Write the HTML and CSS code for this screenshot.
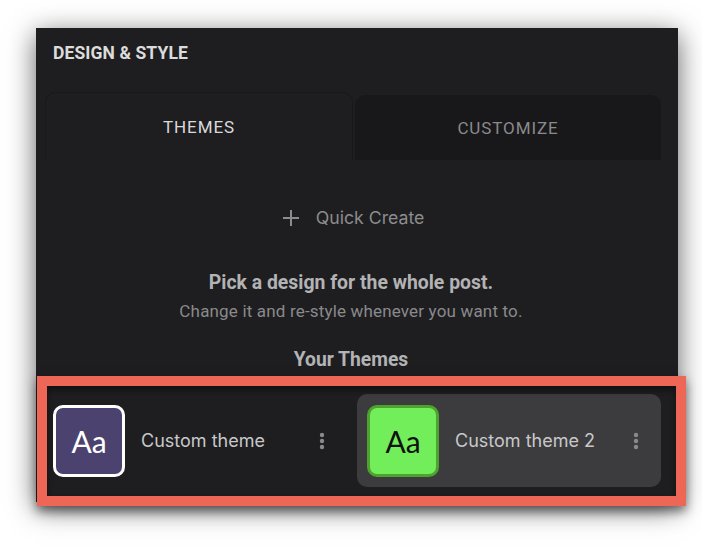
FILE: index.html
```html
<!DOCTYPE html>
<html lang="en">
<head>
<meta charset="utf-8">
<title>Design &amp; Style</title>
<link rel="stylesheet" href="styles.css">
</head>
<body>
<div class="stage">
  <section class="panel">
    <h1 class="panel-title">DESIGN &amp; STYLE</h1>
    <div class="tabs">
      <div class="tab tab-active">THEMES</div>
      <div class="tab tab-idle">CUSTOMIZE</div>
    </div>
    <div class="intro">
      <div class="quick-create">
        <svg class="plus" width="18" height="18" viewBox="0 0 18 18"><path d="M9 1v16M1 9h16" stroke="#8c8c8e" stroke-width="2" fill="none"/></svg>
        <span>Quick Create</span>
      </div>
      <p class="pick">Pick a design for the whole post.</p>
      <p class="change">Change it and re-style whenever you want to.</p>
      <h2 class="your-themes">Your Themes</h2>
    </div>
    <div class="cards">
      <div class="card">
        <div class="swatch swatch-purple">Aa</div>
        <span class="card-name">Custom theme</span>
        <svg class="more" width="6" height="18" viewBox="0 0 6 18"><circle cx="3" cy="3" r="2.2" fill="#8a8a8c"/><circle cx="3" cy="9" r="2.2" fill="#8a8a8c"/><circle cx="3" cy="15" r="2.2" fill="#8a8a8c"/></svg>
      </div>
      <div class="card card-selected">
        <div class="swatch swatch-green">Aa</div>
        <span class="card-name">Custom theme 2</span>
        <svg class="more" width="6" height="18" viewBox="0 0 6 18"><circle cx="3" cy="3" r="2.2" fill="#8a8a8c"/><circle cx="3" cy="9" r="2.2" fill="#8a8a8c"/><circle cx="3" cy="15" r="2.2" fill="#8a8a8c"/></svg>
      </div>
    </div>
  </section>
  <div class="highlight"></div>
</div>
</body>
</html>
```

FILE: styles.css
```css
html, body {
  margin: 0;
  padding: 0;
  background: #ffffff;
}
body {
  width: 702px;
  height: 552px;
  overflow: hidden;
  font-family: Roboto, "Liberation Sans", sans-serif;
}
.stage {
  position: relative;
  width: 702px;
  height: 552px;
  padding: 28px 0 0 36px;
  box-sizing: border-box;
}
.panel {
  width: 642px;
  height: 474px;
  background: #1e1e20;
  box-shadow: 0 6px 26px rgba(0, 0, 0, 0.62);
  display: flex;
  flex-direction: column;
  box-sizing: border-box;
  padding-top: 13px;
}
.panel-title {
  margin: 0 0 0 17px;
  font-size: 17.5px;
  line-height: 24px;
  font-weight: 700;
  letter-spacing: 0.1px;
  color: #dcdcdc;
}
.tabs {
  display: flex;
  align-items: flex-end;
  gap: 2px;
  margin: 27px 0 0 9px;
  width: 616px;
}
.tab {
  flex: 1;
  display: flex;
  align-items: center;
  justify-content: center;
  font-size: 17px;
  line-height: 24px;
  font-weight: 400;
  letter-spacing: 0.9px;
  border-radius: 10px 10px 0 0;
  box-sizing: border-box;
}
.tab-active {
  height: 68px;
  color: #dadadc;
  border: 1px solid #19191b;
  border-bottom: none;
}
.tab-idle {
  height: 65px;
  color: #8a8a8c;
  background: #18181a;
}
.intro {
  display: flex;
  flex-direction: column;
  align-items: center;
  padding: 0 21px 0 9px;
}
.quick-create {
  display: flex;
  align-items: center;
  gap: 16px;
  margin: 46px 0 0 4px;
  font-family: Inter, "Noto Sans", sans-serif;
  font-size: 17.7px;
  line-height: 24px;
  color: #8c8c8e;
}
.plus {
  display: block;
}
.pick {
  margin: 41px 0 0;
  font-size: 19.4px;
  line-height: 24px;
  font-weight: 700;
  color: #b3b3b5;
}
.change {
  margin: 4px 0 0;
  font-size: 17px;
  line-height: 24px;
  letter-spacing: 0.17px;
  color: #8a8a8c;
}
.your-themes {
  margin: 25px 0 0;
  font-size: 19.3px;
  line-height: 24px;
  font-weight: 700;
  color: #b3b3b5;
}
.cards {
  display: flex;
  gap: 10px;
  margin: 22px 0 0 7px;
  width: 618px;
}
.card {
  flex: 1;
  height: 93px;
  border-radius: 10px;
  display: flex;
  align-items: center;
  padding: 0 22px 0 10px;
  box-sizing: border-box;
}
.card-selected {
  background: #3c3c3e;
}
.swatch {
  width: 72px;
  height: 72px;
  box-sizing: border-box;
  border-radius: 10px;
  display: flex;
  align-items: center;
  justify-content: center;
  font-family: Lato, "Open Sans", sans-serif;
  font-size: 30px;
  line-height: 1;
  flex: none;
}
.swatch-purple {
  background: #4b4270;
  border: 3px solid #ffffff;
  color: #ffffff;
}
.swatch-green {
  background: #72ee5a;
  border: 3px solid #4ea22e;
  color: #111111;
}
.card-name {
  flex: 1;
  margin-left: 16px;
  font-family: Inter, "Noto Sans", sans-serif;
  font-size: 18px;
  line-height: 24px;
  color: #c8c8ca;
}
.more {
  display: block;
  flex: none;
}
.highlight {
  position: absolute;
  left: 37px;
  top: 376px;
  width: 649px;
  height: 130px;
  box-sizing: border-box;
  border: 10px solid #ed6656;
  box-shadow: 0 5px 10px rgba(0, 0, 0, 0.5), inset 0 4px 6px rgba(0, 0, 0, 0.45);
  pointer-events: none;
}
```
